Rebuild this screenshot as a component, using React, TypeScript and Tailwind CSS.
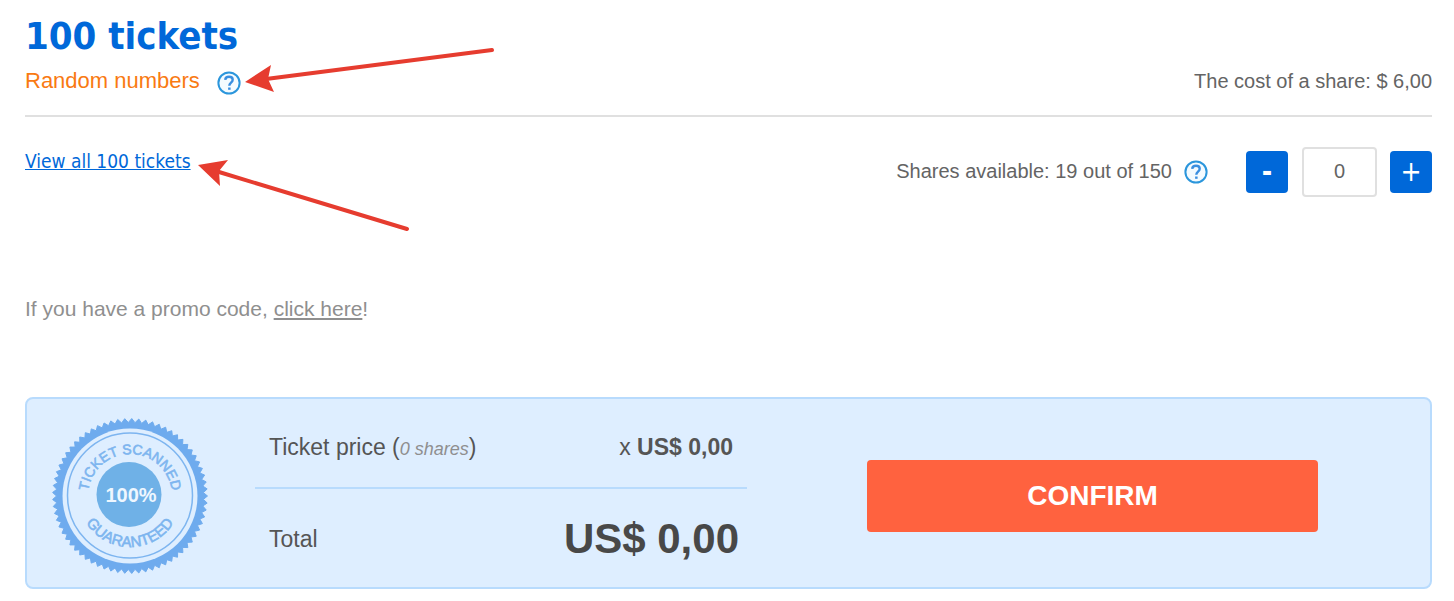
import React, { useState } from 'react';

const TEETH = 69;

// toothed rim of the seal
const rim = Array.from({ length: TEETH * 2 }, (_, i) => {
  const r = i % 2 === 0 ? 77.5 : 73.5;
  const a = (i * Math.PI) / TEETH;
  return `${(78 + r * Math.cos(a)).toFixed(2)},${(78 + r * Math.sin(a)).toFixed(2)}`;
}).join(' ');

function HelpButton({ label }: { label: string }) {
  return (
    <button type="button" aria-label={label} className="shrink-0 cursor-pointer">
      <svg viewBox="0 0 24 24" className="h-6 w-6" fill="none">
        <circle cx="12" cy="12" r="10.6" fill="#f4fbff" stroke="#2b96dc" strokeWidth="2" />
        <path d="M8.200 8.800C8.400 6.600 9.800 5.800 12 5.800c2.200 0 3.700 1.100 3.700 3 0 2.900-3.400 2.900-3.400 6" stroke="#3a8fe0" strokeWidth="2.400" />
        <path d="M11.100 16.500h2.500v2.300h-2.500z" fill="#3a8fe0" />
      </svg>
    </button>
  );
}

function Seal() {
  return (
    <svg viewBox="0 0 156 156" className="h-39 w-39 shrink-0" role="img" aria-label="Ticket scanned, 100% guaranteed">
      <defs>
        <path id="seal-top" d="M36 78a42 42 0 0 1 84 0" />
        <path id="seal-bottom" d="M26 77a52 52 0 0 0 104 0" />
      </defs>
      <polygon points={rim} fill="#6eabee" stroke="#6eabee" strokeWidth="1" strokeLinejoin="round" />
      <circle cx="78" cy="78" r="67.5" fill="#deeeff" />
      <circle cx="78" cy="77.5" r="62.5" fill="none" stroke="#7db5f0" strokeWidth="1.5" />
      <circle cx="77" cy="76.5" r="32.5" fill="#6fb1e7" />
      <g fill="#7db5ef" stroke="#7db5ef" strokeWidth="0.6" textAnchor="middle" className="font-['Liberation_Sans',Arial,sans-serif]">
        <text fontSize="14">
          <textPath href="#seal-top" startOffset="50%">TICKET SCANNED</textPath>
        </text>
        <text fontSize="15">
          <textPath href="#seal-bottom" startOffset="50%">GUARANTEED</textPath>
        </text>
      </g>
      <text x="79" y="84" fill="#eef7ff" fontSize="20" fontWeight="700" textAnchor="middle" className="font-['Liberation_Sans',Arial,sans-serif]">
        100%
      </text>
    </svg>
  );
}

function Arrows() {
  return (
    <svg className="pointer-events-none absolute top-0 left-0" width="500" height="240" fill="#e63c2f" stroke="#e63c2f" aria-hidden="true">
      <path d="M492 50L266 79M407 229L219 172" strokeWidth="4" strokeLinecap="round" />
      <path d="M245 82l26-17-3 14 6 13zM198 165l30-5-9 11 1 15z" stroke="none" />
    </svg>
  );
}

export default function App() {
  const [shares, setShares] = useState(0);
  const total = `US$ ${(shares * 6).toFixed(2).replace('.', ',')}`;

  return (
    <main className="relative bg-white pt-3 pr-[22px] pb-3 pl-[25px] font-['Liberation_Sans',Arial,sans-serif] text-xl text-[#646464]">
      <header className="border-b-2 border-[#e0e0e0] pb-5">
        <h1 className="font-['DejaVu_Sans_Condensed','DejaVu_Sans',sans-serif] text-[38px] leading-12 font-bold text-[#0068d9]">100 tickets</h1>
        <div className="flex h-[35px] items-center justify-between pt-1.5">
          <div className="flex items-center gap-[17px]">
            <span className="text-[22px] leading-8 text-[#f97a12]">Random numbers</span>
            <div className="flex pt-1">
              <HelpButton label="About random numbers" />
            </div>
          </div>
          <span>The cost of a share: $ 6,00</span>
        </div>
      </header>

      <section className="flex items-start justify-between pt-[30px]">
        <a href="#tickets" className="font-['DejaVu_Sans_Condensed','DejaVu_Sans',sans-serif] text-[19px] leading-7 text-[#0068d9] underline">
          View all 100 tickets
        </a>
        <div className="flex items-center">
          <label htmlFor="shares" className="pb-0.5">Shares available: 19 out of 150</label>
          <div className="mr-[38px] ml-3 flex">
            <HelpButton label="About shares" />
          </div>
          <button
            type="button"
            aria-label="Remove a share"
            onClick={() => setShares(Math.max(0, shares - 1))}
            className="h-[42px] w-[42px] rounded bg-[#0068d9] font-['DejaVu_Sans_Condensed','DejaVu_Sans',sans-serif] text-[28px] leading-10 font-bold text-white"
          >
            -
          </button>
          <input
            id="shares"
            value={shares}
            onChange={(e) => setShares(Math.min(19, Number(e.target.value) || 0))}
            className="mr-[13px] ml-3.5 h-[50px] w-[75px] rounded border-2 border-[#e0e0e0] pb-0.5 text-center"
          />
          <button
            type="button"
            aria-label="Add a share"
            onClick={() => setShares(Math.min(19, shares + 1))}
            className="h-[42px] w-[42px] rounded bg-[#0068d9] font-['DejaVu_Sans_Condensed','DejaVu_Sans',sans-serif] text-[28px] leading-10 text-white"
          >
            +
          </button>
        </div>
      </section>

      <p className="pt-[98px] text-[21px] leading-7 text-[#8f8f8f]">
        If you have a promo code, <a href="#promo" className="underline">click here</a>!
      </p>

      <section className="mt-[74px] flex items-center rounded-lg border-2 border-[#b8dbfd] bg-[#deeeff] pt-[19px] pr-28 pb-[13px] pl-[25px]">
        <Seal />
        <div className="ml-[47px] flex-[492] pt-0.5 text-[23px] leading-8 text-[#555]">
          <div className="flex items-center justify-between border-b-2 border-[#b8dbfd] px-3.5 pb-6">
            <span>
              Ticket price (<em className="text-lg text-[#8f8f8f]">{shares} shares</em>)
            </span>
            <span>
              x <b>{total}</b>
            </span>
          </div>
          <div className="flex items-center justify-between pt-[26px] pr-2 pl-3.5">
            <span>Total</span>
            <strong className="text-[42px] leading-12 text-[#484848]">{total}</strong>
          </div>
        </div>
        <button type="button" className="ml-30 h-18 flex-[451] rounded bg-[#ff623f] text-[28px] font-bold text-white">
          CONFIRM
        </button>
      </section>

      <Arrows />
    </main>
  );
}
